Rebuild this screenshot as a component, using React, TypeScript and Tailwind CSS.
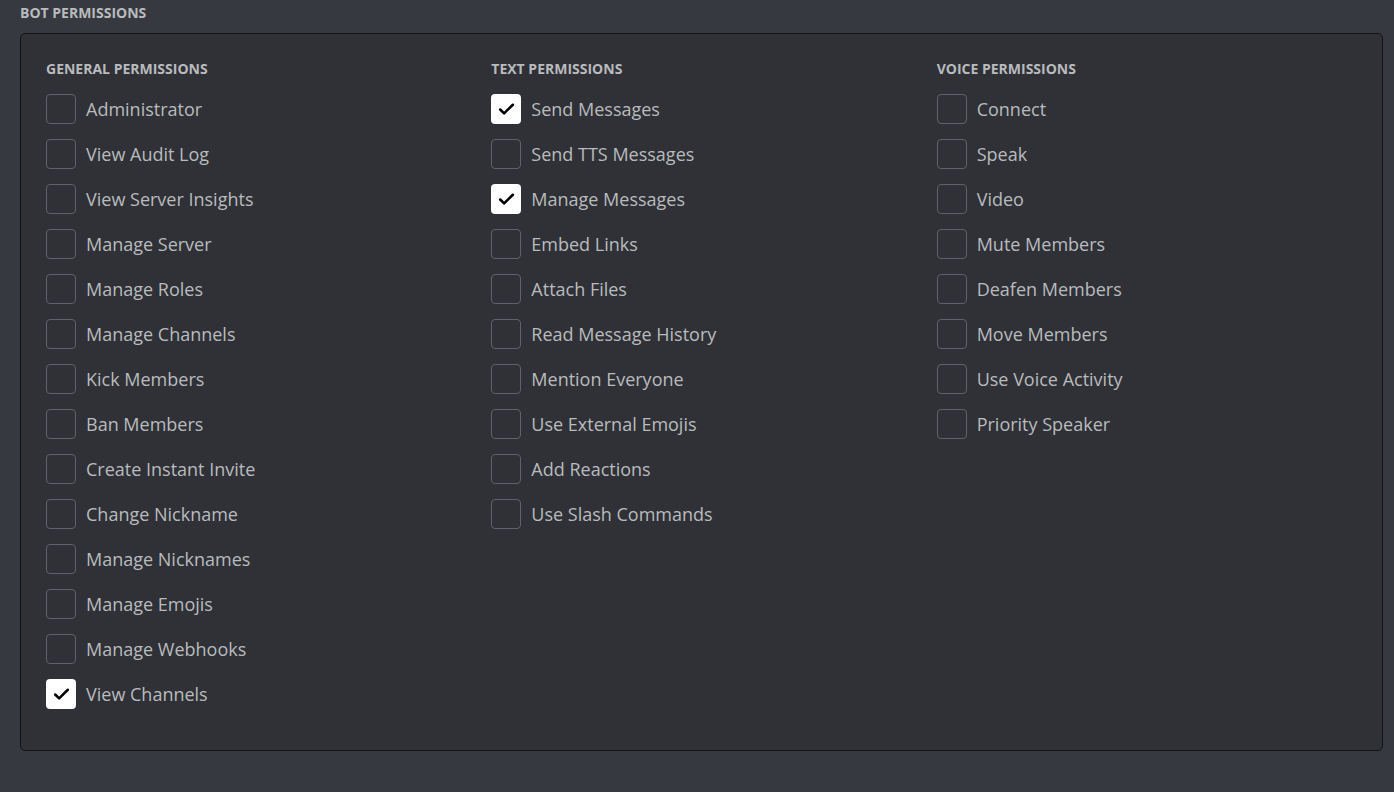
import { Check } from "lucide-react";

const columns: { title: string; items: [string, boolean][] }[] = [
  {
    title: "General Permissions",
    items: [
      ["Administrator", false],
      ["View Audit Log", false],
      ["View Server Insights", false],
      ["Manage Server", false],
      ["Manage Roles", false],
      ["Manage Channels", false],
      ["Kick Members", false],
      ["Ban Members", false],
      ["Create Instant Invite", false],
      ["Change Nickname", false],
      ["Manage Nicknames", false],
      ["Manage Emojis", false],
      ["Manage Webhooks", false],
      ["View Channels", true],
    ],
  },
  {
    title: "Text Permissions",
    items: [
      ["Send Messages", true],
      ["Send TTS Messages", false],
      ["Manage Messages", true],
      ["Embed Links", false],
      ["Attach Files", false],
      ["Read Message History", false],
      ["Mention Everyone", false],
      ["Use External Emojis", false],
      ["Add Reactions", false],
      ["Use Slash Commands", false],
    ],
  },
  {
    title: "Voice Permissions",
    items: [
      ["Connect", false],
      ["Speak", false],
      ["Video", false],
      ["Mute Members", false],
      ["Deafen Members", false],
      ["Move Members", false],
      ["Use Voice Activity", false],
      ["Priority Speaker", false],
    ],
  },
];

function Box({ checked }: { checked: boolean }) {
  return checked ? (
    <div className="flex h-[30px] w-[30px] shrink-0 items-center justify-center rounded-[4px] bg-white">
      <Check className="h-[19px] w-[19px] text-black" strokeWidth={3.2} />
    </div>
  ) : (
    <div className="h-[30px] w-[30px] shrink-0 rounded-[4px] border border-[#5f6268]" />
  );
}

export default function App() {
  return (
    <div
      className="min-h-screen bg-[#36393f] pl-[20px] pr-[11px] pt-[5px] text-[#b9bbbe]"
      style={{ fontFamily: '"Open Sans", "Noto Sans", sans-serif' }}
    >
      <h2 className="mb-[12px] text-[14px] font-bold uppercase leading-[16px]">Bot Permissions</h2>
      <div className="grid grid-cols-3 rounded-[5px] border border-[#131416] bg-[#2f3136] pb-[41px] pl-[25px] pt-[27px]">
        {columns.map((col) => (
          <div key={col.title}>
            <h3 className="mb-[17px] text-[14px] font-bold uppercase leading-[16px]">{col.title}</h3>
            <div className="flex flex-col gap-[15px]">
              {col.items.map(([label, checked]) => (
                <label key={label} className="flex items-center gap-[10px]">
                  <Box checked={checked} />
                  <span className="text-[18px] leading-[24px]">{label}</span>
                </label>
              ))}
            </div>
          </div>
        ))}
      </div>
    </div>
  );
}
